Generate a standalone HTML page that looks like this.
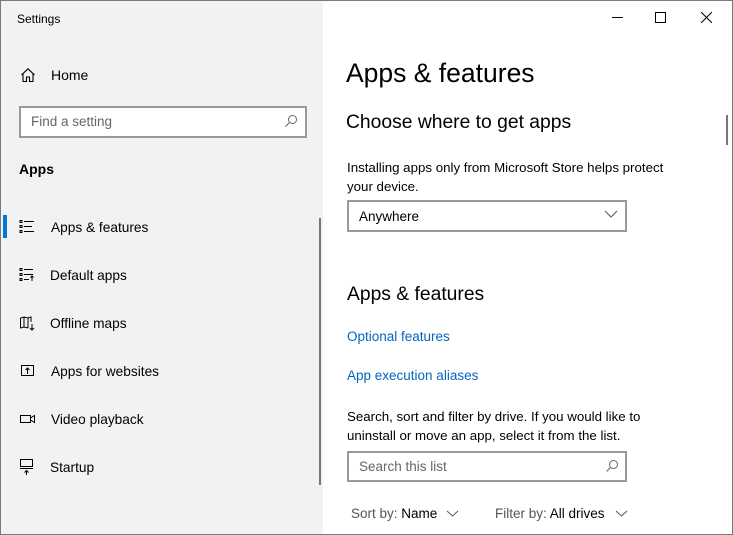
<!DOCTYPE html>
<html><head><style>
*{margin:0;padding:0;box-sizing:border-box}
body{width:733px;height:535px;overflow:hidden;font-family:"Liberation Sans",sans-serif;color:#000;background:#fff;position:relative}
.win{position:absolute;left:0;top:0;width:733px;height:535px;border:1px solid #7a7a7a}
.left{position:absolute;left:1px;top:1px;width:322px;height:533px;background:#f2f2f2}
.a{position:absolute;white-space:nowrap}
.nav{font-size:13.7px;color:#000}
.link{color:#0067c0;font-size:13.5px}
.box{position:absolute;border:2px solid #999;background:#fff}
svg{position:absolute}
</style></head><body>
<div class="win"></div>
<div class="left"></div>
<div class="a" style="left:17px;top:12px;font-size:12px">Settings</div>
<svg style="left:20px;top:67px" width="16" height="16" viewBox="0 0 16 16" fill="none" stroke="#000" stroke-width="1.1"><path d="M1.5 8 L8 1.8 L14.5 8 M3 6.5 V14.5 H6.5 V10 H9.5 V14.5 H13 V6.5"/></svg>
<div class="a nav" style="left:51px;top:67px;font-size:14px">Home</div>
<div class="box" style="left:19px;top:106px;width:288px;height:32px;background:#fff"></div>
<div class="a" style="left:31px;top:114px;font-size:13.5px;color:#666">Find a setting</div>
<svg style="left:284px;top:114px" width="14" height="14" viewBox="0 0 14 14" fill="none" stroke="#666" stroke-width="1"><circle cx="8.5" cy="5.5" r="4"/><path d="M5.6 8.4 L1.5 12.5"/></svg>
<div class="a" style="left:19px;top:161px;font-size:14px;font-weight:bold">Apps</div>
<div class="a" style="left:3px;top:215px;width:4px;height:23px;background:#0078d7"></div>
<div class="a" style="left:319px;top:218px;width:2px;height:267px;background:#777"></div>
<svg style="left:19px;top:219px" width="16" height="16" viewBox="0 0 16 16" fill="none" stroke="#000" stroke-width="1"><path d="M1 1.5h2v2h-2zM1 6.5h2v2h-2zM1 11.5h2v2h-2zM5 2.5h10M5 7.5h8M5 12.5h10"/></svg>
<div class="a nav" style="left:51px;top:220px">Apps &amp; features</div>
<svg style="left:19px;top:267px" width="16" height="16" viewBox="0 0 16 16" fill="none" stroke="#000" stroke-width="1"><path d="M1 1.5h2v2h-2zM1 6.5h2v2h-2zM1 11.5h2v2h-2zM5 2.5h9M5 7.5h9M5 12.5h5M13 14V9M11.5 10.5L13 9L14.5 10.5"/></svg>
<div class="a nav" style="left:50px;top:268px">Default apps</div>
<svg style="left:19px;top:315px" width="16" height="16" viewBox="0 0 16 16" fill="none" stroke="#000" stroke-width="1"><path d="M1.5 3L5 2L9 3L12 2V7M1.5 3V13L5 12L9 13M5 2V12M9 3V13M13 9V15M11 13L13 15L15 13"/></svg>
<div class="a nav" style="left:50px;top:316px">Offline maps</div>
<svg style="left:20px;top:363px" width="16" height="16" viewBox="0 0 16 16" fill="none" stroke="#000" stroke-width="1"><path d="M1.5 2.5H13.5V12.5H1.5ZM7.5 11V5M5.5 7L7.5 5L9.5 7"/></svg>
<div class="a nav" style="left:51px;top:364px">Apps for websites</div>
<svg style="left:19px;top:411px" width="18" height="16" viewBox="0 0 18 16" fill="none" stroke="#000" stroke-width="1"><path d="M1.5 4.5H11.5V11.5H1.5ZM11.5 7L15.5 4.5V11.5L11.5 9"/></svg>
<div class="a nav" style="left:51px;top:412px">Video playback</div>
<svg style="left:19px;top:458px" width="16" height="18" viewBox="0 0 16 18" fill="none" stroke="#000" stroke-width="1"><path d="M1.5 1.5H13.5V8.5H1.5ZM1 10.5H14M7.5 17V12.5M5.5 14.5L7.5 12.5L9.5 14.5"/></svg>
<div class="a nav" style="left:50px;top:460px">Startup</div>

<div class="a" style="left:612px;top:17px;width:11px;height:1px;background:#000"></div>
<div class="a" style="left:655px;top:12px;width:11px;height:11px;border:1px solid #000"></div>
<svg style="left:701px;top:12px" width="11" height="11" viewBox="0 0 11 11" stroke="#000" stroke-width="1"><path d="M0 0L11 11M11 0L0 11"/></svg>
<div class="a" style="left:726px;top:115px;width:2px;height:30px;background:#777"></div>

<div class="a" style="left:346px;top:58px;font-size:26.5px">Apps &amp; features</div>
<div class="a" style="left:346px;top:112px;font-size:19.3px">Choose where to get apps</div>
<div class="a" style="left:347px;top:158px;font-size:13.3px;line-height:19px">Installing apps only from Microsoft Store helps protect<br>your device.</div>
<div class="box" style="left:347px;top:200px;width:280px;height:32px"></div>
<div class="a" style="left:359px;top:209px;font-size:13.5px">Anywhere</div>
<svg style="left:604px;top:210px" width="14" height="8" viewBox="0 0 14 8" fill="none" stroke="#555" stroke-width="1"><path d="M1 1L7 7L13 1"/></svg>
<div class="a" style="left:347px;top:284px;font-size:19.3px">Apps &amp; features</div>
<div class="a link" style="left:347px;top:329px">Optional features</div>
<div class="a link" style="left:347px;top:368px">App execution aliases</div>
<div class="a" style="left:347px;top:407px;font-size:13.3px;line-height:19px">Search, sort and filter by drive. If you would like to<br>uninstall or move an app, select it from the list.</div>
<div class="box" style="left:347px;top:451px;width:280px;height:31px"></div>
<div class="a" style="left:359px;top:459px;font-size:13.5px;color:#666">Search this list</div>
<svg style="left:605px;top:459px" width="14" height="14" viewBox="0 0 14 14" fill="none" stroke="#666" stroke-width="1"><circle cx="8.5" cy="5.5" r="4"/><path d="M5.6 8.4 L1.5 12.5"/></svg>
<div class="a" style="left:351px;top:506px;font-size:13.5px;color:#555">Sort by: <span style="color:#000">Name</span></div>
<svg style="left:446px;top:510px" width="13" height="7" viewBox="0 0 13 7" fill="none" stroke="#555" stroke-width="1"><path d="M1 1L6.5 6L12 1"/></svg>
<div class="a" style="left:495px;top:506px;font-size:13.5px;color:#555">Filter by: <span style="color:#000">All drives</span></div>
<svg style="left:615px;top:510px" width="13" height="7" viewBox="0 0 13 7" fill="none" stroke="#555" stroke-width="1"><path d="M1 1L6.5 6L12 1"/></svg>
</body></html>
